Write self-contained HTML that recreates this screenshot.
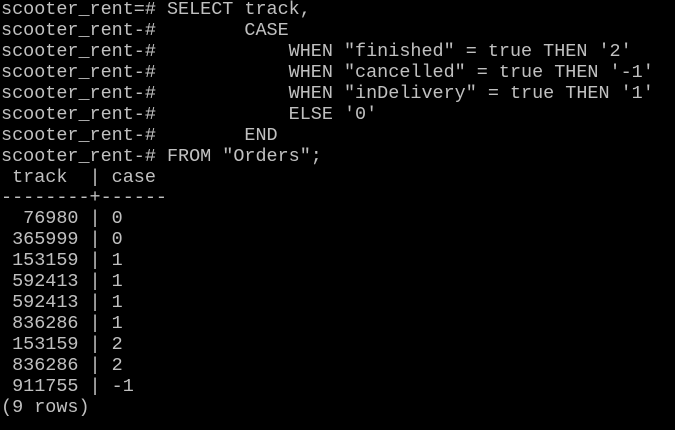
<!DOCTYPE html>
<html><head><style>
html,body{margin:0;padding:0;background:#000;width:675px;height:430px;overflow:hidden}
.t{position:absolute;left:1px;top:0px;color:#c0c0c0;font-family:"Liberation Mono",monospace;font-size:18.45px;}
.t div{height:20.95px;line-height:20.95px;white-space:pre;overflow:visible}
</style></head><body><div class="t">
<div>scooter_rent=# SELECT track,</div>
<div>scooter_rent-#        CASE</div>
<div>scooter_rent-#            WHEN "finished" = true THEN '2'</div>
<div>scooter_rent-#            WHEN "cancelled" = true THEN '-1'</div>
<div>scooter_rent-#            WHEN "inDelivery" = true THEN '1'</div>
<div>scooter_rent-#            ELSE '0'</div>
<div>scooter_rent-#        END</div>
<div>scooter_rent-# FROM "Orders";</div>
<div> track  | case</div>
<div>--------+------</div>
<div>  76980 | 0</div>
<div> 365999 | 0</div>
<div> 153159 | 1</div>
<div> 592413 | 1</div>
<div> 592413 | 1</div>
<div> 836286 | 1</div>
<div> 153159 | 2</div>
<div> 836286 | 2</div>
<div> 911755 | -1</div>
<div>(9 rows)</div>
</div></body></html>
